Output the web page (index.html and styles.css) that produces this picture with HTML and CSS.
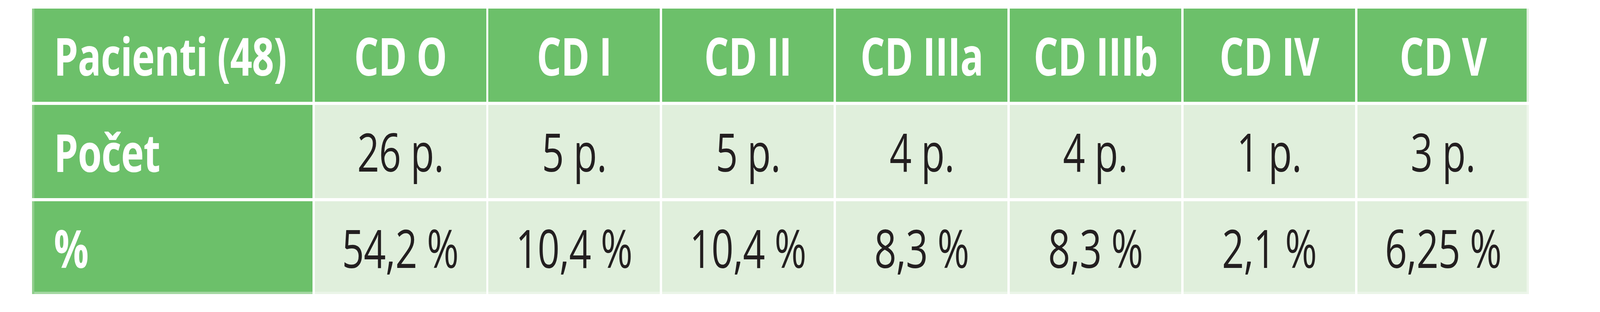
FILE: index.html
```html
<!DOCTYPE html>
<html lang="cs">
<head>
<meta charset="utf-8">
<title>Pacienti</title>
<link rel="stylesheet" href="styles.css">
</head>
<body>
<div class="table">
  <div class="cell head first"><span class="txt">Pacienti (48)</span></div>
  <div class="cell head"><span class="txt">CD O</span></div>
  <div class="cell head"><span class="txt">CD I</span></div>
  <div class="cell head"><span class="txt">CD II</span></div>
  <div class="cell head"><span class="txt">CD IIIa</span></div>
  <div class="cell head"><span class="txt">CD IIIb</span></div>
  <div class="cell head"><span class="txt">CD IV</span></div>
  <div class="cell head last"><span class="txt">CD V</span></div>

  <div class="cell head first"><span class="txt">Počet</span></div>
  <div class="cell data"><span class="txt">26 p.</span></div>
  <div class="cell data"><span class="txt">5 p.</span></div>
  <div class="cell data"><span class="txt">5 p.</span></div>
  <div class="cell data"><span class="txt">4 p.</span></div>
  <div class="cell data"><span class="txt">4 p.</span></div>
  <div class="cell data"><span class="txt">1 p.</span></div>
  <div class="cell data last"><span class="txt">3 p.</span></div>

  <div class="cell head first bottom"><span class="txt">%</span></div>
  <div class="cell data bottom"><span class="txt">54,2 %</span></div>
  <div class="cell data bottom"><span class="txt">10,4 %</span></div>
  <div class="cell data bottom"><span class="txt">10,4 %</span></div>
  <div class="cell data bottom"><span class="txt">8,3 %</span></div>
  <div class="cell data bottom"><span class="txt">8,3 %</span></div>
  <div class="cell data bottom"><span class="txt">2,1 %</span></div>
  <div class="cell data bottom last"><span class="txt">6,25 %</span></div>
</div>
</body>
</html>
```
FILE: styles.css
```css
/* Horizontal sizes are fractions of the 5593px-wide reference,
   vertical sizes are plain pixels (800px-high frame). */
:root {
  --u: calc(100vw / 5593);
  --sx: 0.7323;
}

@supports (width: calc(1px * tan(atan2(1px, 2px)))) {
  :root {
    --sx: tan(atan2(100vw, 5593px));
  }
}

html, body {
  margin: 0;
  padding: 0;
  background: #ffffff;
  overflow: hidden;
}

body {
  padding-top: 22px;
  padding-left: calc(var(--u) * 112);
  font-family: "Open Sans", "Noto Sans", sans-serif;
}

.table {
  display: grid;
  grid-template-columns: calc(var(--u) * 980) repeat(7, calc(var(--u) * 599.5));
  grid-template-rows: 239px 239px 238px;
  column-gap: calc(var(--u) * 8);
  row-gap: 8px;
  width: max-content;
}

.cell {
  display: flex;
  align-items: center;
  justify-content: center;
  font-size: 135px;
  line-height: 1;
  box-sizing: border-box;
  white-space: nowrap;
}

.txt {
  display: inline-block;
  transform: scaleX(var(--sx));
  transform-origin: center center;
}

.head {
  background: #6cc06a;
  color: #ffffff;
  font-weight: 700;
  letter-spacing: -1px;
  padding-top: 1px;
}

.head.first {
  justify-content: flex-start;
  padding-left: calc(var(--u) * 76);
  box-shadow: inset calc(var(--u) * 8) 0 0 #8fcd8c;
}

.head.first .txt {
  transform-origin: left center;
}

.head.first.bottom {
  box-shadow: inset calc(var(--u) * 8) 0 0 #8fcd8c, inset 0 -6px 0 #a3d7a1;
}

.head.last {
  box-shadow: inset calc(var(--u) * -8) 0 0 #e4f1e2;
}

.data {
  background: #e0efdc;
  color: #231f20;
  font-weight: 400;
  letter-spacing: -1px;
  padding-top: 0;
}

.data.bottom {
  box-shadow: inset 0 -6px 0 #ebf5e8;
}

.data.last {
  box-shadow: inset calc(var(--u) * -8) 0 0 #eef6ec;
}

.data.bottom.last {
  box-shadow: inset calc(var(--u) * -8) 0 0 #eef6ec, inset 0 -6px 0 #ebf5e8;
}
```
